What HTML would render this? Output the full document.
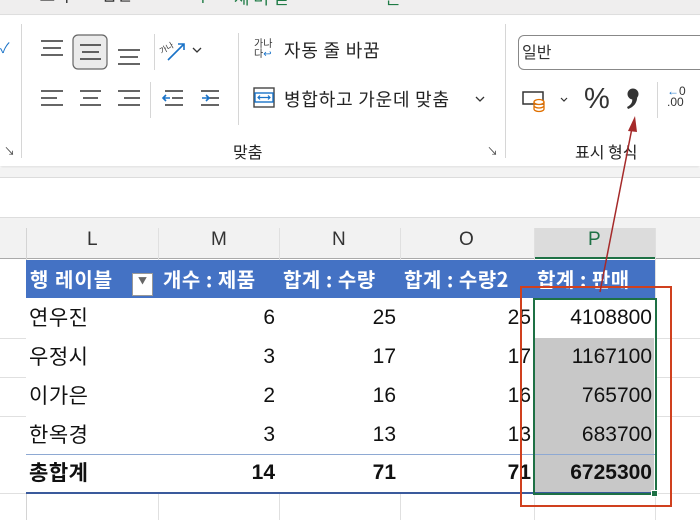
<!DOCTYPE html>
<html><head><meta charset="utf-8"><style>
*{margin:0;padding:0;box-sizing:border-box}
body{width:700px;height:520px;overflow:hidden;position:relative;background:#fff;font-family:"Liberation Sans","Noto Sans CJK KR",sans-serif;color:#222}
.a{position:absolute}
.k{font-family:"Noto Sans CJK KR","Liberation Sans",sans-serif}
</style></head><body>
<!-- top tab bar -->
<div class="a" style="left:0;top:0;width:700px;height:15px;background:#efeeee;border-bottom:1px solid #dedede;overflow:hidden">
<div class="a k" style="left:20px;top:-16px;font-size:17px;color:#333;white-space:nowrap">ㅡ ㅗ ㅜ &nbsp; ㅡㅂㄴ</div>
<div class="a k" style="left:195px;top:-16px;font-size:17px;color:#1e7b45;white-space:nowrap">ㅜ ᄎ 세 버 벧 ᄂ ᅮ &nbsp;&nbsp;&nbsp; ᅮ ᅮ ᆫ</div>
</div>
<!-- ribbon -->
<div class="a" style="left:0;top:16px;width:700px;height:150px;background:#fff;box-shadow:0 2px 3px rgba(0,0,0,.12)"></div>
<div class="a" style="left:21px;top:24px;width:1px;height:134px;background:#d6d6d6"></div>
<div class="a" style="left:154px;top:34px;width:1px;height:36px;background:#d6d6d6"></div>
<div class="a" style="left:150px;top:82px;width:1px;height:36px;background:#d6d6d6"></div>
<div class="a" style="left:238px;top:33px;width:1px;height:92px;background:#d6d6d6"></div>
<div class="a" style="left:505px;top:24px;width:1px;height:134px;background:#d6d6d6"></div>
<div class="a" style="left:657px;top:82px;width:1px;height:36px;background:#d6d6d6"></div>
<div class="a" style="left:0;top:38px;font-size:14px;color:#1a73c8">✓</div>
<svg class="a" style="left:0;top:0" width="240" height="130">
<g stroke="#333" stroke-width="1.6">
<path d="M41 41h22M43 48h18M41 55h22"/>
<rect x="73" y="35" width="34" height="34" rx="5" fill="#ebebeb" stroke="#666" stroke-width="1.2"/>
<path d="M80 45h21M82 52h17M80 59h21"/>
<path d="M118 50h22M120 57h18M118 64h22"/>
<path d="M41 91h22M41 98h16M41 105h22"/>
<path d="M80 91h21M83 98h15M80 105h21"/>
<path d="M118 91h22M124 98h16M118 105h22"/>
<path d="M165 91h18M172 98h11M165 105h18"/>
<path d="M201 91h18M208 98h11M201 105h18"/>
<path d="M193 48l4 4 4-4" fill="none" stroke-width="1.3"/>
</g>
<g stroke="#1a73c8" stroke-width="1.6" fill="none">
<path d="M168 60l16-16M178 44h6v6"/>
<path d="M170 98h-7M166 95l-3 3 3 3"/>
<path d="M202 98h7M206 95l3 3-3 3"/>
</g>
<text x="160" y="52" font-size="8" fill="#333" transform="rotate(-30 165 50)" font-family="Noto Sans CJK KR">가나</text>
</svg>
<div class="a" style="left:4px;top:143px;font-size:11px;color:#444">↘</div>
<div class="a k" style="left:254px;top:38px;font-size:10px;line-height:10px;color:#333">가나<br>다<span style="color:#1a73c8">↩</span></div>
<div class="a k" style="left:284px;top:37px;font-size:18px;line-height:26px;letter-spacing:0.8px">자동 줄 바꿈</div>
<svg class="a" style="left:253px;top:87px" width="24" height="24"><rect x="1" y="1" width="20" height="19" fill="#fff" stroke="#444" stroke-width="1.4"/><rect x="2" y="6" width="18" height="9" fill="#fff" stroke="#1a73c8" stroke-width="1.4"/><path d="M5 10.5h12M7 8.5l-2 2 2 2M15 8.5l2 2-2 2" stroke="#1a73c8" stroke-width="1.2" fill="none"/></svg>
<div class="a k" style="left:284px;top:86px;font-size:18px;line-height:26px;letter-spacing:0.8px;white-space:nowrap">병합하고 가운데 맞춤</div>
<svg class="a" style="left:474px;top:95px" width="12" height="8"><path d="M2 2l4 4 4-4" stroke="#333" stroke-width="1.3" fill="none"/></svg>
<div class="a k" style="left:233px;top:139px;font-size:16px">맞춤</div>
<div class="a" style="left:487px;top:143px;font-size:11px;color:#444">↘</div>
<div class="a" style="left:518px;top:35px;width:190px;height:35px;border:1px solid #888;border-radius:6px"></div>
<div class="a k" style="left:522px;top:38px;font-size:16px;line-height:26px;color:#333">일반</div>
<svg class="a" style="left:520px;top:88px" width="60" height="26"><rect x="3" y="4" width="20" height="12" fill="none" stroke="#333" stroke-width="1.5"/><ellipse cx="19" cy="14" rx="5" ry="2.5" fill="#fff" stroke="#e07000" stroke-width="1.3"/><path d="M14 14v7a5 2.5 0 0 0 10 0v-7M14 17.5a5 2.5 0 0 0 10 0" fill="none" stroke="#e07000" stroke-width="1.3"/><path d="M41 10l3 3 3-3" stroke="#333" stroke-width="1.2" fill="none"/></svg>
<div class="a" style="left:584px;top:83px;font-size:29px;color:#333">%</div>
<svg class="a" style="left:622px;top:86px" width="22" height="28"><circle cx="11" cy="8" r="5.5" fill="#333"/><path d="M15 9c1 7-3 12-9 14l-1-2c4-2 6-5 5-9z" fill="#333"/></svg>
<div class="a" style="left:667px;top:86px;font-size:12px;line-height:11px;color:#333"><span style="color:#1a73c8">←</span>0<br>.00</div>
<div class="a k" style="left:575px;top:139px;font-size:16px">표시 형식</div>
<div class="a" style="left:0;top:168px;width:700px;height:10px;background:#f3f3f3;border-bottom:1px solid #dcdcdc"></div>
<!-- column header -->
<div class="a" style="left:0;top:217px;width:700px;height:42px;background:#f2f2f2;border-top:1px solid #ddd;border-bottom:1px solid #aaa"></div>
<div class="a" style="left:534px;top:228px;width:121px;height:31px;background:#dcdcdc;border-bottom:2px solid #1e7145"></div>
<div class="a" style="left:26px;top:228px;width:1px;height:292px;background:#d4d4d4"></div>
<div class="a" style="left:158px;top:228px;width:1px;height:292px;background:#e0e0e0"></div>
<div class="a" style="left:279px;top:228px;width:1px;height:292px;background:#e0e0e0"></div>
<div class="a" style="left:400px;top:228px;width:1px;height:292px;background:#e0e0e0"></div>
<div class="a" style="left:534px;top:228px;width:1px;height:292px;background:#e0e0e0"></div>
<div class="a" style="left:655px;top:228px;width:1px;height:292px;background:#e0e0e0"></div>
<div class="a" style="left:0;top:229px;width:700px;font-size:19px;color:#333">
<span class="a" style="left:87px">L</span><span class="a" style="left:211px">M</span><span class="a" style="left:332px">N</span><span class="a" style="left:459px">O</span><span class="a" style="left:588px;color:#1e7145">P</span></div>
<div class="a" style="left:0;top:338px;width:700px;height:1px;background:#e0e0e0"></div>
<div class="a" style="left:0;top:377px;width:700px;height:1px;background:#e0e0e0"></div>
<div class="a" style="left:0;top:416px;width:700px;height:1px;background:#e0e0e0"></div>
<div class="a" style="left:0;top:493px;width:700px;height:1px;background:#e0e0e0"></div>
<!-- pivot body white (no inner gridlines) -->
<div class="a" style="left:26px;top:298px;width:629px;height:195px;background:#fff"></div>
<!-- pivot header -->
<div class="a k" style="left:26px;top:260px;width:629px;height:38px;background:#4472c4;color:#fff;font-weight:bold;font-size:20px;line-height:38px;white-space:nowrap;overflow:hidden">
<span class="a" style="left:4px;letter-spacing:1px">행 레이블</span>
<span class="a" style="left:106px;top:13px;width:21px;height:23px;background:#fff;border:1px solid #999"></span>
<span class="a" style="left:112px;top:2px;font-size:9px;color:#666">▼</span>
<span class="a" style="left:137px;letter-spacing:0.5px">개수 : 제품</span>
<span class="a" style="left:257px;letter-spacing:0.5px">합계 : 수량</span>
<span class="a" style="left:378px;letter-spacing:0.5px">합계 : 수량2</span>
<span class="a" style="left:511px;letter-spacing:0.5px">합계 : 판매</span>
</div>
<div class="a" style="left:535px;top:338px;width:119px;height:155px;background:#c8c8c8"></div>
<div class="a" style="left:26px;top:454px;width:629px;height:1px;background:#8ea9d3"></div>
<div class="a" style="left:26px;top:492px;width:629px;height:2px;background:#3a5a9c"></div>
<div class="a k" style="left:0;top:0;font-size:21px;color:#111;letter-spacing:0.5px">
<div class="a" style="left:29px;top:302px;white-space:nowrap">연우진</div>
<div class="a" style="left:29px;top:341px;white-space:nowrap">우정시</div>
<div class="a" style="left:29px;top:380px;white-space:nowrap">이가은</div>
<div class="a" style="left:29px;top:419px;white-space:nowrap">한옥경</div>
<div class="a" style="left:29px;top:457px;white-space:nowrap;font-weight:bold">총합계</div>
</div>
<div class="a" style="left:0;top:0;font-size:21px;color:#111;text-align:right">
<div class="a" style="left:158px;width:117px;top:306px">6</div>
<div class="a" style="left:279px;width:117px;top:306px">25</div>
<div class="a" style="left:400px;width:131px;top:306px">25</div>
<div class="a" style="left:534px;width:118px;top:306px">4108800</div>
<div class="a" style="left:158px;width:117px;top:345px">3</div>
<div class="a" style="left:279px;width:117px;top:345px">17</div>
<div class="a" style="left:400px;width:131px;top:345px">17</div>
<div class="a" style="left:534px;width:118px;top:345px">1167100</div>
<div class="a" style="left:158px;width:117px;top:384px">2</div>
<div class="a" style="left:279px;width:117px;top:384px">16</div>
<div class="a" style="left:400px;width:131px;top:384px">16</div>
<div class="a" style="left:534px;width:118px;top:384px">765700</div>
<div class="a" style="left:158px;width:117px;top:423px">3</div>
<div class="a" style="left:279px;width:117px;top:423px">13</div>
<div class="a" style="left:400px;width:131px;top:423px">13</div>
<div class="a" style="left:534px;width:118px;top:423px">683700</div>
<div class="a" style="left:158px;width:117px;top:461px;font-weight:bold">14</div>
<div class="a" style="left:279px;width:117px;top:461px;font-weight:bold">71</div>
<div class="a" style="left:400px;width:131px;top:461px;font-weight:bold">71</div>
<div class="a" style="left:534px;width:118px;top:461px;font-weight:bold">6725300</div>
</div>
<div class="a" style="left:533px;top:298px;width:124px;height:197px;border:2px solid #1e7145"></div>
<div class="a" style="left:651px;top:490px;width:7px;height:7px;background:#1e7145;border:1px solid #fff"></div>
<div class="a" style="left:520px;top:286px;width:152px;height:221px;border:2px solid #d0401e"></div>
<svg class="a" style="left:0;top:0" width="700" height="520"><path d="M600 292L632 128" stroke="#a52a2a" stroke-width="1.5"/><path d="M635 116l-7 15 9 1z" fill="#a52a2a"/></svg>
</body></html>
